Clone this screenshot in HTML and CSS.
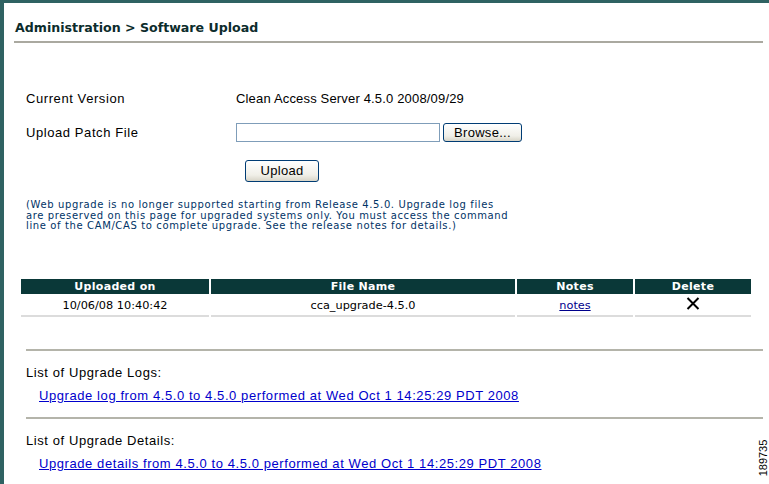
FILE: index.html
```html
<!DOCTYPE html>
<html>
<head>
<meta charset="utf-8">
<link rel="stylesheet" href="styles.css">
</head>
<body>
<div class="frame">
  <h1 class="title">Administration &gt; Software Upload</h1>
  <div class="form">
    <div class="label">Current Version</div>
    <div class="value">Clean Access Server 4.5.0 2008/09/29</div>
    <div class="label">Upload Patch File</div>
    <div class="value file"><span class="input"></span><span class="btn browse">Browse...</span></div>
    <div class="label"></div>
    <div class="value"><span class="btn upload">Upload</span></div>
  </div>
  <p class="note">(Web upgrade is no longer supported starting from Release 4.5.0. Upgrade log files<br>are preserved on this page for upgraded systems only. You must access the command<br>line of the CAM/CAS to complete upgrade. See the release notes for details.)</p>
  <table class="grid">
    <thead>
      <tr><th class="c1">Uploaded on</th><th class="c2">File Name</th><th class="c3">Notes</th><th class="c4">Delete</th></tr>
    </thead>
    <tbody>
      <tr><td>10/06/08 10:40:42</td><td>cca_upgrade-4.5.0</td><td><a href="#">notes</a></td><td><svg class="x" width="14" height="13" viewBox="0 0 14 13"><path d="M1.5 1 L12.5 12 M12.5 1 L1.5 12" stroke="#000" stroke-width="2" fill="none"/></svg></td></tr>
    </tbody>
  </table>
  <div class="sep first"></div>
  <div class="list">
    <div class="list-title">List of Upgrade Logs:</div>
    <a class="list-link" href="#">Upgrade log from 4.5.0 to 4.5.0 performed at Wed Oct 1 14:25:29 PDT 2008</a>
  </div>
  <div class="sep"></div>
  <div class="list">
    <div class="list-title">List of Upgrade Details:</div>
    <a class="list-link" href="#">Upgrade details from 4.5.0 to 4.5.0 performed at Wed Oct 1 14:25:29 PDT 2008</a>
  </div>
</div>
<div class="figid">189735</div>
</body>
</html>
```
FILE: styles.css
```css
html, body {
  margin: 0;
  padding: 0;
  background: #fff;
}
body {
  width: 769px;
  height: 484px;
  overflow: hidden;
  position: relative;
  font-family: "Liberation Sans", Arial, sans-serif;
  font-size: 13px;
  color: #000;
}
.frame {
  border-top: 3px solid #2f6262;
  border-left: 4px solid #2f6262;
  height: 484px;
  box-sizing: border-box;
  padding-right: 6px;
}
.title {
  margin: 0 0 0 10px;
  padding: 17px 0 6px 1px;
  font-family: "DejaVu Sans", Verdana, sans-serif;
  font-weight: bold;
  font-size: 12.6px;
  color: #0c2c2c;
  border-bottom: 2px solid #aaa9a0;
}
.form {
  display: grid;
  grid-template-columns: 210px auto;
  margin: 38px 0 0 22px;
  align-items: center;
}
.label, .value {
  height: 34px;
  display: flex;
  align-items: center;
}
.label { letter-spacing: 0.58px; }
.value { letter-spacing: 0.17px; }
.form > :nth-child(5), .form > :nth-child(6) { height: 40px; }
.file { gap: 3px; }
.input {
  display: inline-block;
  width: 202px;
  height: 17px;
  border: 1px solid #7f9db9;
  background: #fff;
}
.btn {
  display: inline-flex;
  align-items: center;
  justify-content: center;
  box-sizing: border-box;
  border: 1px solid #003c74;
  border-radius: 3px;
  background: linear-gradient(#fff, #f0efe8 70%, #d8d5c8);
  font-size: 13px;
  letter-spacing: 0.3px;
  color: #000;
}
.browse { width: 79px; height: 19px; }
.upload { width: 74px; height: 22px; margin-left: 9px; margin-top: 3px; }
.note {
  margin: 11px 0 0 22px;
  font-family: "DejaVu Sans", Verdana, sans-serif;
  font-size: 10px;
  letter-spacing: 0.62px;
  line-height: 10.5px;
  color: #003366;
}
.grid {
  margin: 45px 0 0 15px;
  width: 734px;
  border-collapse: separate;
  border-spacing: 2px 2px;
  font-family: "DejaVu Sans", Verdana, sans-serif;
}
.grid th {
  background: #0a3838;
  color: #fff;
  font-size: 11px;
  font-weight: bold;
  height: 15px;
  padding: 0;
  letter-spacing: 0.3px;
}
.grid .c1 { width: 188px; }
.grid .c2 { width: 304px; }
.grid .c3 { width: 116px; }
.grid .c4 { width: 116px; }
.grid td {
  font-size: 11.3px;
  text-align: center;
  height: 19px;
  padding: 0;
  border-bottom: 2px solid #dcdcdc;
}
.grid td a { color: #00008b; }
.x { display: block; margin: 0 auto 4px; }
.sep {
  margin-left: 22px;
  border-top: 2px solid #b4b4aa;
  height: 0;
}
.sep.first { margin-top: 30px; }
.list {
  padding: 14px 0 14px 22px;
  display: flex;
  flex-direction: column;
  gap: 8px;
}
.list-title { font-size: 13px; letter-spacing: 0.58px; }
.list-link {
  margin-left: 13px;
  color: #0000cc;
  font-size: 13px;
  letter-spacing: 0.58px;
}
.figid {
  position: absolute;
  right: -14px;
  top: 452px;
  transform: rotate(-90deg);
  font-family: "Liberation Sans", Arial, sans-serif;
  font-size: 11px;
  width: 40px;
  text-align: center;
}
```
